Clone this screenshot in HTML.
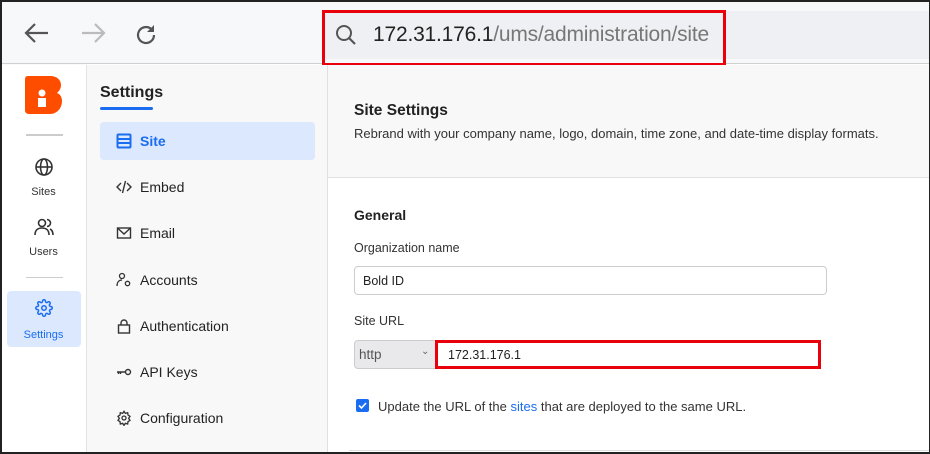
<!DOCTYPE html>
<html><head><style>
*{box-sizing:border-box;margin:0;padding:0}
body{width:930px;height:454px;overflow:hidden;font-family:"Liberation Sans",sans-serif;background:#fff;position:relative}
.frame{position:absolute;inset:0;border:2px solid #222;border-right-width:1px;z-index:10;pointer-events:none}
.top{position:absolute;left:0;top:0;width:930px;height:64px;background:#f7f8fa;border-bottom:1px solid #d0d0d0}
.url{position:absolute;left:325px;top:11px;width:605px;height:48px;background:#eef0f3}
.red{position:absolute;border:3px solid #e8000b}
.rail{position:absolute;left:0;top:65px;width:87px;height:389px;background:#fff;border-right:1px solid #e3e3e3;box-shadow:1px 0 2px rgba(0,0,0,.06)}
.nav{position:absolute;left:87px;top:65px;width:241px;height:389px;background:#f8f8f8;border-right:1px solid #e0e0e0}
.main{position:absolute;left:328px;top:65px;width:602px;height:389px;background:#fff}
.t{position:absolute;white-space:nowrap}
.item{position:absolute;left:13px;width:215px;height:38px;font-size:14px;color:#222;display:flex;align-items:center;padding-left:16px;gap:8px}
.item svg{width:16px;height:16px}
</style></head><body>
<div class="top">
<svg style="position:absolute;left:24px;top:22px" width="26" height="22" viewBox="0 0 26 22"><path d="M24 11H3M11 2L2 11l9 9" fill="none" stroke="#555" stroke-width="2.2"/></svg>
<svg style="position:absolute;left:80px;top:22px" width="26" height="22" viewBox="0 0 26 22"><path d="M2 11h21M15 2l9 9-9 9" fill="none" stroke="#bbb" stroke-width="2.2"/></svg>
<svg style="position:absolute;left:134px;top:23px" width="24" height="24" viewBox="0 0 24 24"><path d="M20 12a8 8 0 1 1-3-6.2" fill="none" stroke="#555" stroke-width="2.2"/><path d="M20 2v7h-7z" fill="#555"/></svg>
</div>
<div class="url">
<svg style="position:absolute;left:10px;top:13px" width="22" height="22" viewBox="0 0 22 22"><circle cx="9" cy="9" r="7" fill="none" stroke="#555" stroke-width="2"/><path d="M14 14l6 6" stroke="#555" stroke-width="2.2"/></svg>
<div class="t" style="left:48px;top:12px;font-size:21px;color:#222;letter-spacing:-0.2px">172.31.176.1<span style="color:#777">/ums/administration/site</span></div>
</div>
<div class="red" style="left:322px;top:10px;width:404px;height:56px"></div>
<div class="rail">
<svg style="position:absolute;left:24px;top:10px" width="40" height="40" viewBox="0 0 40 40"><path d="M4 1h22c7 0 11 4 11 9 0 4-2 6-4 8 3 1 5 4 5 8 0 7-5 13-12 13H5c-3 0-4-2-4-4V5c0-3 1-4 3-4z" fill="#ff4d00"/><circle cx="18" cy="18" r="3.5" fill="#fff"/><rect x="14" y="23" width="8" height="9" fill="#fff"/></svg>
<div style="position:absolute;left:26px;top:69px;width:37px;height:2px;background:#ccc"></div>
<svg style="position:absolute;left:35px;top:93px" width="18" height="18" viewBox="0 0 18 18" fill="none" stroke="#333" stroke-width="1.6"><circle cx="9" cy="9" r="8"/><ellipse cx="9" cy="9" rx="3.5" ry="8"/><path d="M1 9h16"/></svg>
<div class="t" style="left:0;width:87px;text-align:center;top:121px;font-size:11px;color:#333">Sites</div>
<svg style="position:absolute;left:34px;top:153px" width="20" height="18" viewBox="0 0 20 18" fill="none" stroke="#333" stroke-width="1.6"><circle cx="8" cy="5" r="3.5"/><path d="M1 17c0-5 3-7 7-7s7 2 7 7M13 1.5a3.5 3.5 0 0 1 0 7M16 11c2 1 3 3 3 6"/></svg>
<div class="t" style="left:0;width:87px;text-align:center;top:181px;font-size:11px;color:#333">Users</div>
<div style="position:absolute;left:26px;top:212px;width:37px;height:1px;background:#ccc"></div>
<div style="position:absolute;left:7px;top:226px;width:74px;height:56px;background:#dbe8fd;border-radius:4px"></div>
<svg style="position:absolute;left:35px;top:234px" width="18" height="18" viewBox="0 0 24 24" fill="none" stroke="#1a6df0" stroke-width="2"><circle cx="12" cy="12" r="3"/><path d="M19.4 15a1.65 1.65 0 0 0 .33 1.820l.06.06a2 2 0 1 1-2.830 2.830l-.06-.06a1.65 1.65 0 0 0-1.820-.33 1.65 1.65 0 0 0-1 1.510V21a2 2 0 1 1-4 0v-.09A1.65 1.65 0 0 0 9 19.4a1.65 1.65 0 0 0-1.820.33l-.06.06a2 2 0 1 1-2.830-2.830l.06-.06a1.65 1.65 0 0 0 .33-1.820 1.65 1.65 0 0 0-1.510-1H3a2 2 0 1 1 0-4h.09A1.65 1.65 0 0 0 4.6 9a1.65 1.65 0 0 0-.33-1.820l-.06-.06a2 2 0 1 1 2.830-2.830l.06.06a1.65 1.65 0 0 0 1.820.33H9a1.65 1.65 0 0 0 1-1.510V3a2 2 0 1 1 4 0v.09a1.65 1.65 0 0 0 1 1.510 1.65 1.65 0 0 0 1.820-.33l.06-.06a2 2 0 1 1 2.830 2.830l-.06.06a1.65 1.65 0 0 0-.33 1.820V9a1.65 1.65 0 0 0 1.510 1H21a2 2 0 1 1 0 4h-.09a1.65 1.65 0 0 0-1.510 1z"/></svg>
<div class="t" style="left:0;width:87px;text-align:center;top:264px;font-size:11px;color:#1a6df0">Settings</div>
</div>
<div class="nav">
<div class="t" style="left:13px;top:19px;font-size:16px;font-weight:bold;color:#222">Settings</div>
<div style="position:absolute;left:13px;top:42px;width:53px;height:3px;background:#1a6df0;border-radius:2px"></div>
<div class="item" style="top:57px;background:#dbe8fd;border-radius:4px;color:#1a6df0;font-weight:bold"><svg viewBox="0 0 16 16"><rect x="1.5" y="1.5" width="13" height="13" rx="1" fill="none" stroke="#1a6df0" stroke-width="2"/><path d="M2 6h12M2 10h12" stroke="#1a6df0" stroke-width="2"/></svg>Site</div>
<div class="item" style="top:103px"><svg viewBox="0 0 16 16" fill="none" stroke="#333" stroke-width="1.4"><path d="M5 4L1 8l4 4M11 4l4 4-4 4M9.5 2l-3 12"/></svg>Embed</div>
<div class="item" style="top:149px"><svg viewBox="0 0 16 16" fill="none" stroke="#333" stroke-width="1.4"><rect x="1.5" y="3" width="13" height="10"/><path d="M1.5 3l6.5 6 6.5-6"/></svg>Email</div>
<div class="item" style="top:196px"><svg viewBox="0 0 16 16" fill="none" stroke="#333" stroke-width="1.3"><circle cx="6" cy="4" r="2.5"/><path d="M1 14c0-4 2-6 5-6"/><circle cx="11.5" cy="11.5" r="2.2"/></svg>Accounts</div>
<div class="item" style="top:242px"><svg viewBox="0 0 16 16" fill="none" stroke="#333" stroke-width="1.4"><rect x="2.5" y="7" width="11" height="8"/><path d="M5 7V5a3 3 0 0 1 6 0v2"/></svg>Authentication</div>
<div class="item" style="top:288px"><svg viewBox="0 0 16 16" fill="none" stroke="#333" stroke-width="1.4"><circle cx="12" cy="8" r="2.5"/><path d="M9.5 8H1M2.5 8v2M4.5 8v2"/></svg>API Keys</div>
<div class="item" style="top:334px"><svg viewBox="0 0 24 24" fill="none" stroke="#333" stroke-width="2"><circle cx="12" cy="12" r="3"/><path d="M12 2l2 3 3.5-1 .5 3.5 3 2-2 3 2 3-3 2-.5 3.5-3.5-1-2 3-2-3-3.5 1-.5-3.5-3-2 2-3-2-3 3-2L6.5 4 10 5z"/></svg>Configuration</div>
</div>
<div class="main">
<div style="position:absolute;left:0;top:0;width:602px;height:113px;background:#f8f8f8;border-bottom:1px solid #e0e0e0"></div>
<div class="t" style="left:26px;top:37px;font-size:15.5px;font-weight:bold;color:#222">Site Settings</div>
<div class="t" style="left:26px;top:61px;font-size:13px;color:#333">Rebrand with your company name, logo, domain, time zone, and date-time display formats.</div>
<div class="t" style="left:26px;top:142px;font-size:14px;font-weight:bold;color:#222">General</div>
<div class="t" style="left:26px;top:176px;font-size:12.5px;color:#333">Organization name</div>
<div style="position:absolute;left:26px;top:201px;width:473px;height:29px;border:1px solid #ccc;border-radius:4px;font-size:12.5px;color:#222;padding:7px 8px">Bold ID</div>
<div class="t" style="left:26px;top:249px;font-size:12.5px;color:#333">Site URL</div>
<div style="position:absolute;left:26px;top:275px;width:82px;height:29px;background:#e9e9ec;border:1px solid #ccc;border-radius:4px 0 0 4px;font-size:13.5px;color:#555;padding:6px 4px">http<span style="position:absolute;left:66px;top:5px;font-size:10px;color:#666">&#8964;</span></div>
<div style="position:absolute;left:108px;top:275px;width:384px;height:29px;border:1px solid #ccc;font-size:12.5px;color:#222;padding:7px 11px">172.31.176.1</div>
<div class="red" style="left:107px;top:275px;width:386px;height:29px"></div>
<div style="position:absolute;left:28px;top:334px;width:13px;height:13px;background:#1a6df0;border-radius:2px"></div>
<svg style="position:absolute;left:28px;top:334px" width="13" height="13" viewBox="0 0 13 13"><path d="M3 6.5l2.5 2.5L10 4" fill="none" stroke="#fff" stroke-width="1.6"/></svg>
<div class="t" style="left:50px;top:334px;font-size:13px;color:#333">Update the URL of the <span style="color:#1a6df0">sites</span> that are deployed to the same URL.</div>
<div style="position:absolute;left:21px;top:385px;width:581px;height:1px;background:#ddd"></div>
</div>
<div class="frame"></div>
</body></html>
